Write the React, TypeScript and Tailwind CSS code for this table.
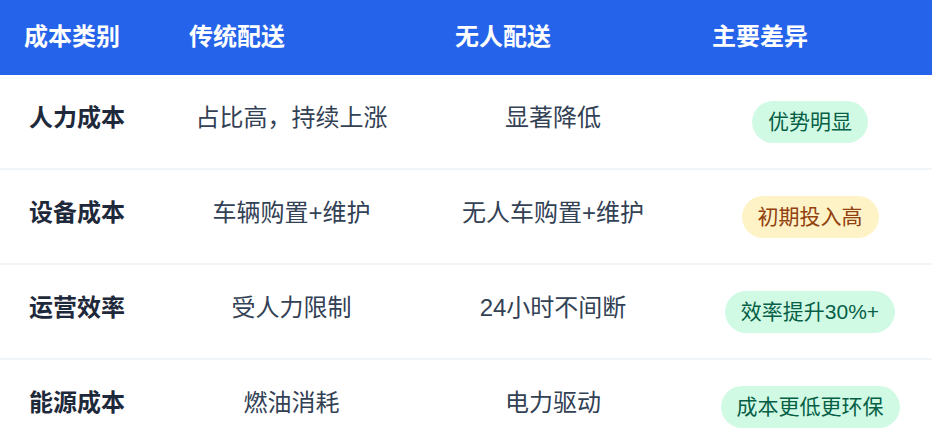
const rows = [
  {
    category: "人力成本",
    traditional: "占比高，持续上涨",
    unmanned: "显著降低",
    diff: "优势明显",
    tone: "green",
  },
  {
    category: "设备成本",
    traditional: "车辆购置+维护",
    unmanned: "无人车购置+维护",
    diff: "初期投入高",
    tone: "amber",
  },
  {
    category: "运营效率",
    traditional: "受人力限制",
    unmanned: "24小时不间断",
    diff: "效率提升30%+",
    tone: "green",
  },
  {
    category: "能源成本",
    traditional: "燃油消耗",
    unmanned: "电力驱动",
    diff: "成本更低更环保",
    tone: "green",
  },
];

function Badge({ text, tone }: { text: string; tone: string }) {
  const color =
    tone === "amber"
      ? "bg-[#fef3c7] text-[#92400e]"
      : "bg-[#d1fae5] text-[#065f46]";
  return (
    <span className={`inline-flex h-[42px] items-center rounded-full px-4 text-[21px] leading-none ${color}`}>
      {text}
    </span>
  );
}

export default function App() {
  return (
    <div
      className="w-[932px] h-[442px] overflow-hidden bg-white"
      style={{ fontFamily: '"Liberation Sans", "Noto Sans CJK SC", sans-serif' }}
    >
      <div className="grid grid-cols-[165px_253px_270px_244px] h-[75px] bg-[#2563eb] text-white text-[24px] font-bold">
        <div className="flex items-center pl-6 pb-[2px]">成本类别</div>
        <div className="flex items-center pl-6 pb-[2px]">传统配送</div>
        <div className="flex items-center pl-[37px] pb-[2px]">无人配送</div>
        <div className="flex items-center pl-6 pb-[2px]">主要差异</div>
      </div>

      {rows.map((row) => (
        <div
          key={row.category}
          className="grid grid-cols-[165px_253px_270px_244px] h-[95px] border-b-2 border-[#f1f5f9] text-[24px]"
        >
          <div className="flex items-center pl-[29px] pb-2 font-bold text-[#1e293b]">{row.category}</div>
          <div className="flex items-center justify-center pb-2 text-[#334155]">{row.traditional}</div>
          <div className="flex items-center justify-center pb-2 text-[#334155]">{row.unmanned}</div>
          <div className="flex items-center justify-center">
            <Badge text={row.diff} tone={row.tone} />
          </div>
        </div>
      ))}
    </div>
  );
}
